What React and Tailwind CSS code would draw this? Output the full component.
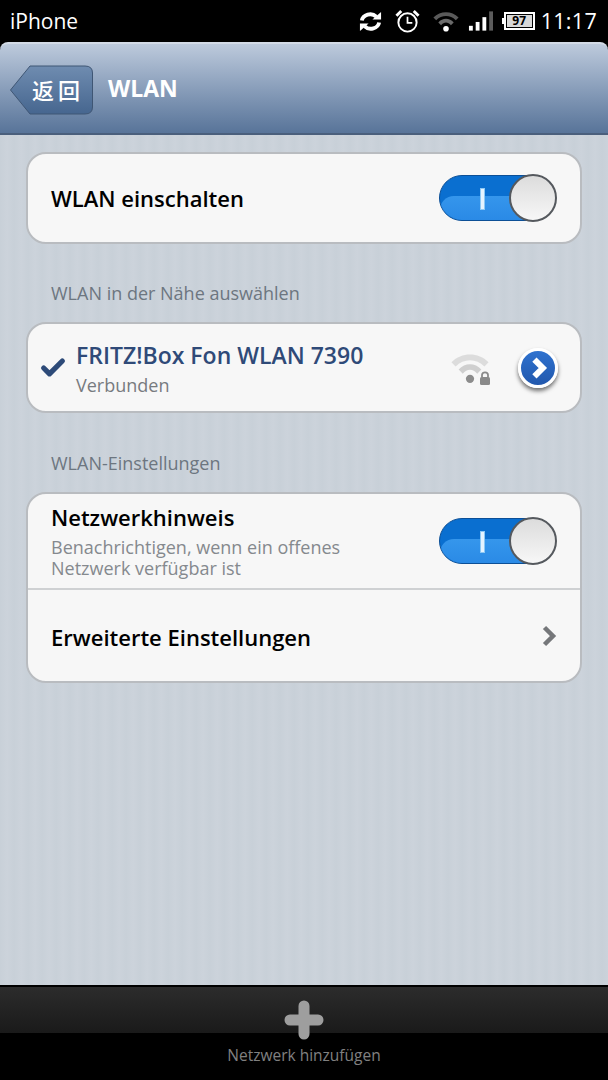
import { Check } from 'lucide-react'

function Toggle() {
  return (
    <div className="relative w-[118px] h-[46px]">
      <div className="absolute left-0 top-0 w-[112px] h-[46px] rounded-full overflow-hidden bg-[#0a6fd0] border border-[#0c4f96]">
        <div className="absolute left-0 right-0 bottom-0 h-[24px] rounded-t-[14px] bg-gradient-to-b from-[#3596ec] to-[#2a8ae6]" />
        <div className="absolute left-[40px] top-[12px] w-[5px] h-[22px] bg-[#e4f3ff] border border-[#8cc8f5]" />
      </div>
      <div className="absolute right-0 top-[-1px] w-[48px] h-[48px] rounded-full border-2 border-[#55595e] bg-gradient-to-b from-[#dcdcdc] to-[#f7f7f7]" />
    </div>
  )
}

function SectionLabel({ children }) {
  return <p className="pl-[25px] text-[18px] leading-[24px] text-[#6d7680]">{children}</p>
}

function Card({ children, className }) {
  return (
    <div className={`rounded-[20px] bg-[#f7f7f7] border-2 border-[#b9bcc0] ${className}`}>
      {children}
    </div>
  )
}

function WifiBars({ className, outer, middle, dot }) {
  return (
    <svg viewBox="0 0 40 32" className={className}>
      <path d="M2 11 C12 1 28 1 38 11 L34 15 C26 7 14 7 6 15 Z" fill={outer} />
      <path d="M9 18 C15 11 25 11 31 18 L27 22 C23 17 17 17 13 22 Z" fill={middle} />
      <circle cx="20" cy="27" r="4" fill={dot} />
    </svg>
  )
}

export default function App() {
  return (
    <div className="w-[608px] h-[1080px] flex flex-col bg-black overflow-hidden font-['Open_Sans','Noto_Sans',sans-serif]">
      {/* status bar */}
      <div className="h-[42px] shrink-0 flex items-center justify-between pl-[10px] pr-[11px] text-white">
        <span className="text-[21px] leading-none">iPhone</span>
        <div className="flex items-center">
          <svg viewBox="0 0 24 24" className="w-[23px] h-[23px] mr-[13px]" fill="none" stroke="white" strokeWidth="4">
            <path d="M3 11 C4 5 13 2 18 7" />
            <path d="M21 13 C20 19 11 22 6 17" />
            <path d="M14 10 L23 10 L23 2 Z" fill="white" stroke="none" />
            <path d="M10 14 L1 14 L1 22 Z" fill="white" stroke="none" />
          </svg>
          <svg viewBox="0 0 26 26" className="w-[25px] h-[25px] mr-[12px]" fill="none" stroke="white">
            <circle cx="13" cy="14" r="9.5" strokeWidth="2" />
            <path d="M13 8 V14.5 H18" strokeWidth="1.8" />
            <path d="M1.5 7 L6.5 2 M24.5 7 L19.5 2" strokeWidth="3" />
          </svg>
          <WifiBars className="w-[28px] h-[24px] mr-[8px]" outer="#5a5a5a" middle="#6a6a6a" dot="white" />
          <svg viewBox="0 0 26 22" className="w-[25px] h-[22px] mr-[11px]">
            <rect x="1" y="16" width="4" height="5" fill="white" />
            <rect x="8" y="12" width="4" height="9" fill="white" />
            <rect x="15" y="7" width="4" height="14" fill="white" />
            <rect x="22" y="1" width="4" height="20" fill="#5c5c5c" />
          </svg>
          <div className="relative w-[31px] h-[18px] mr-[6px] border-2 border-white flex items-center justify-center">
            <span className="absolute left-[-4px] top-[4px] w-[2px] h-[6px] bg-white" />
            <span className="w-[25px] h-[12px] bg-[#d8d8d8] text-black text-[12px] leading-[12px] font-bold text-center">97</span>
          </div>
          <span className="text-[21.5px] leading-none tracking-[0.3px]">11:17</span>
        </div>
      </div>

      {/* title bar */}
      <div className="h-[93px] shrink-0 flex items-center rounded-t-[8px] border-t-2 border-b-2 border-t-[#d3dbe6] border-b-[#4a5f7c] bg-gradient-to-b from-[#bdcadc] to-[#587499] pl-[10px]">
        <div className="relative w-[83px] h-[50px] shrink-0 mt-[2px]">
          <svg viewBox="0 0 83 50" className="absolute inset-0 w-full h-full">
            <defs>
              <linearGradient id="backFill" x1="0" y1="0" x2="0" y2="1">
                <stop offset="0" stopColor="#6f8cb0" />
                <stop offset="1" stopColor="#46668f" />
              </linearGradient>
            </defs>
            <path d="M0.5 25 L20 1 H75 Q82.5 1 82.5 8 V42 Q82.5 49 75 49 H20 Z" fill="url(#backFill)" stroke="#3f5674" strokeWidth="1" />
          </svg>
          <span className="absolute left-[22px] top-[9px] text-[22px] leading-[30px] tracking-[4px] font-medium text-white font-['Noto_Sans_CJK_SC',sans-serif]">返回</span>
        </div>
        <span className="ml-[15px] text-[23px] font-bold text-white">WLAN</span>
      </div>

      {/* settings list */}
      <div className="flex-1 px-[26px] pt-[17px] bg-[#cbd2da] bg-[repeating-linear-gradient(90deg,#c8d0d8_0px,#ccd3db_7px,#c8d0d8_14px)]">
        <Card className="h-[92px] flex items-center justify-between pl-[23px] pr-[23px]">
          <span className="text-[22px] font-semibold text-black">WLAN einschalten</span>
          <Toggle />
        </Card>

        <div className="mt-[37px] mb-[17px]">
          <SectionLabel>WLAN in der Nähe auswählen</SectionLabel>
        </div>

        <Card className="h-[91px] flex items-center pl-[11px] pr-[22px]">
          <Check className="w-[28px] h-[28px] text-[#2d4a78] mr-[9px]" strokeWidth={4.5} />
          <div className="flex-1 mt-[2px]">
            <p className="text-[23px] leading-[30px] font-semibold text-[#2f4a78]">FRITZ!Box Fon WLAN 7390</p>
            <p className="text-[18px] leading-[24px] text-[#777b80] mt-[3px]">Verbunden</p>
          </div>
          <div className="relative w-[42px] h-[34px] mr-[27px] -ml-[2px]">
            <WifiBars className="w-[42px] h-[33px]" outer="#dcdcdc" middle="#cfcfcf" dot="#8c8c8c" />
            <svg viewBox="0 0 12 14" className="absolute right-0 bottom-0 w-[12px] h-[14px]">
              <path d="M3 6 V4 C3 0.5 9 0.5 9 4 V6" fill="none" stroke="#8a8a8a" strokeWidth="1.8" />
              <rect x="1" y="6" width="10" height="8" rx="1.5" fill="#8a8a8a" />
            </svg>
          </div>
          <div className="w-[40px] h-[40px] rounded-full border-[3px] border-white bg-gradient-to-b from-[#2f72cf] to-[#2258ad] shadow-[0_3px_4px_rgba(0,0,0,0.55)] flex items-center justify-center">
            <svg viewBox="0 0 20 20" className="w-[24px] h-[24px]" fill="none" stroke="white" strokeWidth="5">
              <path d="M7 3 L14 10 L7 17" />
            </svg>
          </div>
        </Card>

        <div className="mt-[38px] mb-[17px]">
          <SectionLabel>WLAN-Einstellungen</SectionLabel>
        </div>

        <Card className="h-[191px] flex flex-col">
          <div className="h-[96px] shrink-0 flex items-center justify-between pl-[23px] pr-[23px] border-b-2 border-[#cfd1d3]">
            <div>
              <p className="text-[22px] leading-[26px] font-semibold text-black">Netzwerkhinweis</p>
              <p className="mt-[7px] text-[18px] leading-[21px] text-[#85898e]">Benachrichtigen, wenn ein offenes<br />Netzwerk verfügbar ist</p>
            </div>
            <Toggle />
          </div>
          <div className="flex-1 flex items-center justify-between pl-[23px] pr-[22px] pt-[3px]">
            <span className="text-[22px] font-semibold text-black">Erweiterte Einstellungen</span>
            <svg viewBox="0 0 16 22" className="w-[16px] h-[22px] -mt-[3px]" fill="none" stroke="#75777a" strokeWidth="4.5">
              <path d="M2.5 2.5 L11 11 L2.5 19.5" />
            </svg>
          </div>
        </Card>
      </div>

      {/* bottom action bar */}
      <div className="h-[95px] shrink-0 relative flex flex-col items-center border-t-2 border-black bg-black">
        <div className="absolute left-0 right-0 top-0 h-[46px] bg-gradient-to-b from-[#2c2c2c] to-[#1a1a1a]" />
        <svg viewBox="0 0 40 40" className="relative w-[40px] h-[40px] mt-[13px]" stroke="#9e9e9e" strokeWidth="11" strokeLinecap="round">
          <path d="M20 6 V34 M6 20 H34" />
        </svg>
        <span className="relative mt-[4px] text-[15.5px] leading-[22px] text-[#808080]">Netzwerk hinzufügen</span>
      </div>
    </div>
  )
}
